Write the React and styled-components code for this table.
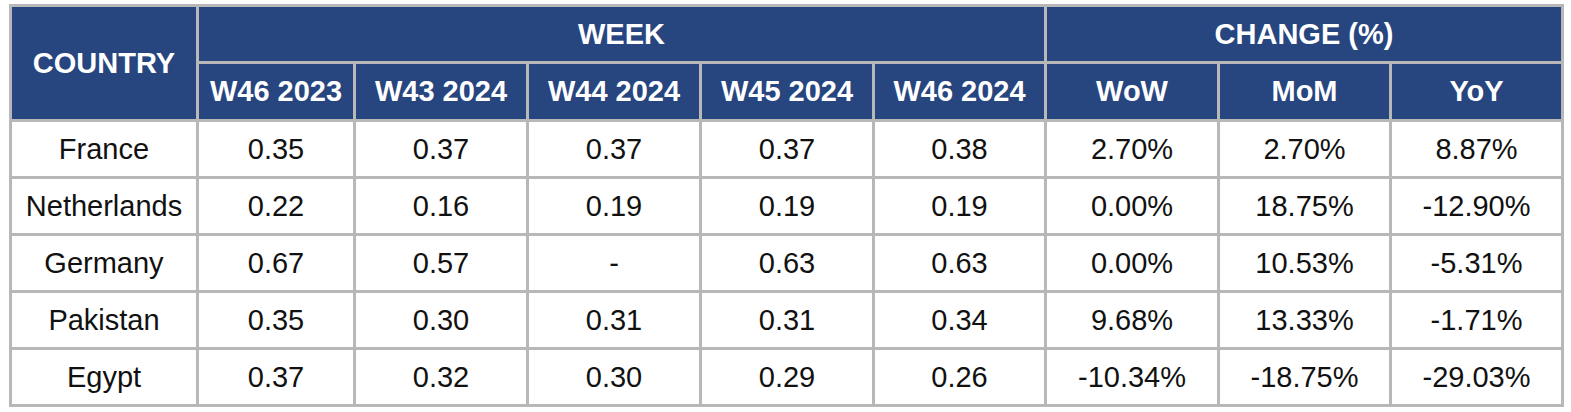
import React from 'react';
import styled, { createGlobalStyle } from 'styled-components';

const GlobalStyle = createGlobalStyle`
  body {
    margin: 0;
    background: #ffffff;
    font-family: "Liberation Sans", Arial, sans-serif;
  }
`;

const Page = styled.div`
  padding: 4px 0 0 9px;
`;

const Table = styled.table`
  table-layout: fixed;
  border-collapse: separate;
  border-spacing: 0;
  width: 1555px;
  border-left: 3px solid #b8b8b8;
  border-top: 3px solid #b8b8b8;
`;

const Head = styled.th`
  box-sizing: border-box;
  height: ${(p) => p.$h || 57}px;
  padding: 0;
  background: #27457f;
  color: #ffffff;
  font-size: 29px;
  font-weight: 700;
  text-align: center;
  vertical-align: middle;
  border-right: 3px solid #b8b8b8;
  border-bottom: 3px solid #b8b8b8;
  white-space: nowrap;
`;

const Cell = styled.td`
  box-sizing: border-box;
  height: 57px;
  padding: 0;
  background: #ffffff;
  color: #111111;
  font-size: 29px;
  text-align: center;
  vertical-align: middle;
  border-right: 3px solid #b8b8b8;
  border-bottom: 3px solid #b8b8b8;
  white-space: nowrap;
`;

const widths = [187, 157, 173, 173, 173, 172, 173, 172, 172];
const weeks = ['W46 2023', 'W43 2024', 'W44 2024', 'W45 2024', 'W46 2024'];
const changes = ['WoW', 'MoM', 'YoY'];

const rows = [
  ['France', '0.35', '0.37', '0.37', '0.37', '0.38', '2.70%', '2.70%', '8.87%'],
  ['Netherlands', '0.22', '0.16', '0.19', '0.19', '0.19', '0.00%', '18.75%', '-12.90%'],
  ['Germany', '0.67', '0.57', '-', '0.63', '0.63', '0.00%', '10.53%', '-5.31%'],
  ['Pakistan', '0.35', '0.30', '0.31', '0.31', '0.34', '9.68%', '13.33%', '-1.71%'],
  ['Egypt', '0.37', '0.32', '0.30', '0.29', '0.26', '-10.34%', '-18.75%', '-29.03%'],
];

export default function App() {
  return (
    <Page>
      <GlobalStyle />
      <Table>
        <colgroup>
          {widths.map((w, i) => (
            <col key={i} style={{ width: w }} />
          ))}
        </colgroup>
        <thead>
          <tr>
            <Head rowSpan={2}>COUNTRY</Head>
            <Head colSpan={5}>WEEK</Head>
            <Head colSpan={3}>CHANGE (%)</Head>
          </tr>
          <tr>
            {weeks.concat(changes).map((h) => (
              <Head key={h} $h={58}>{h}</Head>
            ))}
          </tr>
        </thead>
        <tbody>
          {rows.map((row) => (
            <tr key={row[0]}>
              {row.map((v, i) => (
                <Cell key={i}>{v}</Cell>
              ))}
            </tr>
          ))}
        </tbody>
      </Table>
    </Page>
  );
}
